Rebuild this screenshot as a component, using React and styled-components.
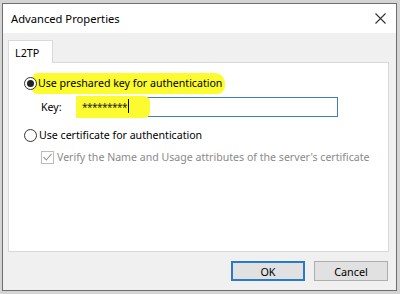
import React from 'react'
import styled, { createGlobalStyle } from 'styled-components'

const Global = createGlobalStyle`
  * { box-sizing: border-box; }
  body {
    margin: 0;
    background: #cfcfcf;
    font-family: "Noto Sans", "Liberation Sans", sans-serif;
  }
`

const Screen = styled.div`
  width: 400px;
  height: 294px;
  padding: 3px 3px 3px 2px;
  background: #d4d4d4;
  overflow: hidden;
`

const Window = styled.div`
  height: 100%;
  display: flex;
  flex-direction: column;
  border: 1px solid #6e6e6e;
  background: #f0f0f0;
`

const TitleBar = styled.div`
  height: 29px;
  flex: none;
  display: flex;
  align-items: center;
  justify-content: space-between;
  padding: 0 10px 0 8px;
  background: #fff;
  font-size: 11.2px;
  color: #000;
`

const Body = styled.div`
  flex: 1;
  display: flex;
  flex-direction: column;
  padding: 7px 7px 8px 5px;
`

const Tabs = styled.div`
  display: flex;
  height: 22px;
  position: relative;
  z-index: 1;
`

const Tab = styled.div`
  width: 45px;
  height: 23px;
  padding: 4px 0 0 6px;
  background: #fff;
  border: 1px solid #d9d9d9;
  border-bottom: none;
  font-size: 10.8px;
  color: #000;
`

const Panel = styled.div`
  height: 190px;
  flex: none;
  background: #fff;
  border: 1px solid #d9d9d9;
  padding: 10px 0 0 15px;
  display: flex;
  flex-direction: column;
`

const Row = styled.div`
  display: flex;
  align-items: center;
  height: 20px;
  white-space: nowrap;
  margin-left: ${p => p.$indent || 0}px;
  margin-top: ${p => p.$top || 0}px;
  font-size: 10.6px;
  color: ${p => (p.$disabled ? '#8a8a8a' : '#000')};
`

const Radio = styled.span`
  width: 13px;
  height: 13px;
  flex: none;
  border-radius: 50%;
  border: 1px solid #333;
  background: #fff;
  display: flex;
  align-items: center;
  justify-content: center;
  position: relative;
  z-index: 1;
  &::after {
    content: '';
    width: 7px;
    height: 7px;
    border-radius: 50%;
    background: #222;
    display: ${p => (p.$checked ? 'block' : 'none')};
  }
`

const Label = styled.span`
  white-space: nowrap;
  padding: ${p => (p.$mark ? '3px 3px 4px 6px' : '0')};
  margin-left: ${p => (p.$mark ? '-5px' : '2px')};
  background: ${p => (p.$mark ? '#fbfb2f' : 'transparent')};
  border-radius: 6px 10px 8px 5px;
`

const KeyLabel = styled.span`
  width: 35px;
  flex: none;
`

const Input = styled.div`
  width: 262px;
  height: 20px;
  border: 1px solid #3f7fbf;
  background: #fff;
  display: flex;
  align-items: stretch;
`

const Marked = styled.span`
  width: 74px;
  margin: -2px 0 -2px -1px;
  padding: 4px 0 0 6px;
  background: #fbfb2f;
  border-radius: 2px 6px 6px 2px;
  font-size: 10px;
  letter-spacing: -0.5px;
  color: #222;
  display: flex;
  align-items: flex-start;
`

const Caret = styled.span`
  width: 1px;
  height: 14px;
  margin: -1px 0 0 1px;
  background: #000;
`

const Check = styled.span`
  width: 13px;
  height: 13px;
  flex: none;
  border: 1px solid #bcbcbc;
  background: #fff;
  margin-right: 3px;
  display: flex;
  align-items: center;
  justify-content: center;
`

const Footer = styled.div`
  display: flex;
  justify-content: flex-end;
  gap: 9px;
  padding: 9px 1px 0 0;
`

const Button = styled.button`
  width: 74px;
  height: 20px;
  font-family: inherit;
  font-size: 10.8px;
  color: #000;
  background: #e1e1e1;
  border: ${p => (p.$primary ? '2px solid #2b7ac9' : '1px solid #adadad')};
  padding: 0;
`

export default function App() {
  return (
    <Screen>
      <Global />
      <Window>
        <TitleBar>
          <span>Advanced Properties</span>
          <svg width="11" height="11" viewBox="0 0 11 11">
            <path d="M0.5 0.5 L10.5 10.5 M10.5 0.5 L0.5 10.5" stroke="#333" strokeWidth="1.1" fill="none" />
          </svg>
        </TitleBar>
        <Body>
          <Tabs>
            <Tab>L2TP</Tab>
          </Tabs>
          <Panel>
            <Row>
              <Radio $checked />
              <Label $mark>Use preshared key for authentication</Label>
            </Row>
            <Row $indent={17} $top={4}>
              <KeyLabel>Key:</KeyLabel>
              <Input>
                <Marked>*********<Caret /></Marked>
              </Input>
            </Row>
            <Row $top={8}>
              <Radio />
              <Label>Use certificate for authentication</Label>
            </Row>
            <Row $indent={17} $top={2} $disabled>
              <Check>
                <svg width="9" height="8" viewBox="0 0 9 8">
                  <path d="M0.5 4 L3.3 7 L8.5 0.8" stroke="#9a9a9a" strokeWidth="1.1" fill="none" />
                </svg>
              </Check>
              <span>Verify the Name and Usage attributes of the server's certificate</span>
            </Row>
          </Panel>
          <Footer>
            <Button $primary>OK</Button>
            <Button>Cancel</Button>
          </Footer>
        </Body>
      </Window>
    </Screen>
  )
}
